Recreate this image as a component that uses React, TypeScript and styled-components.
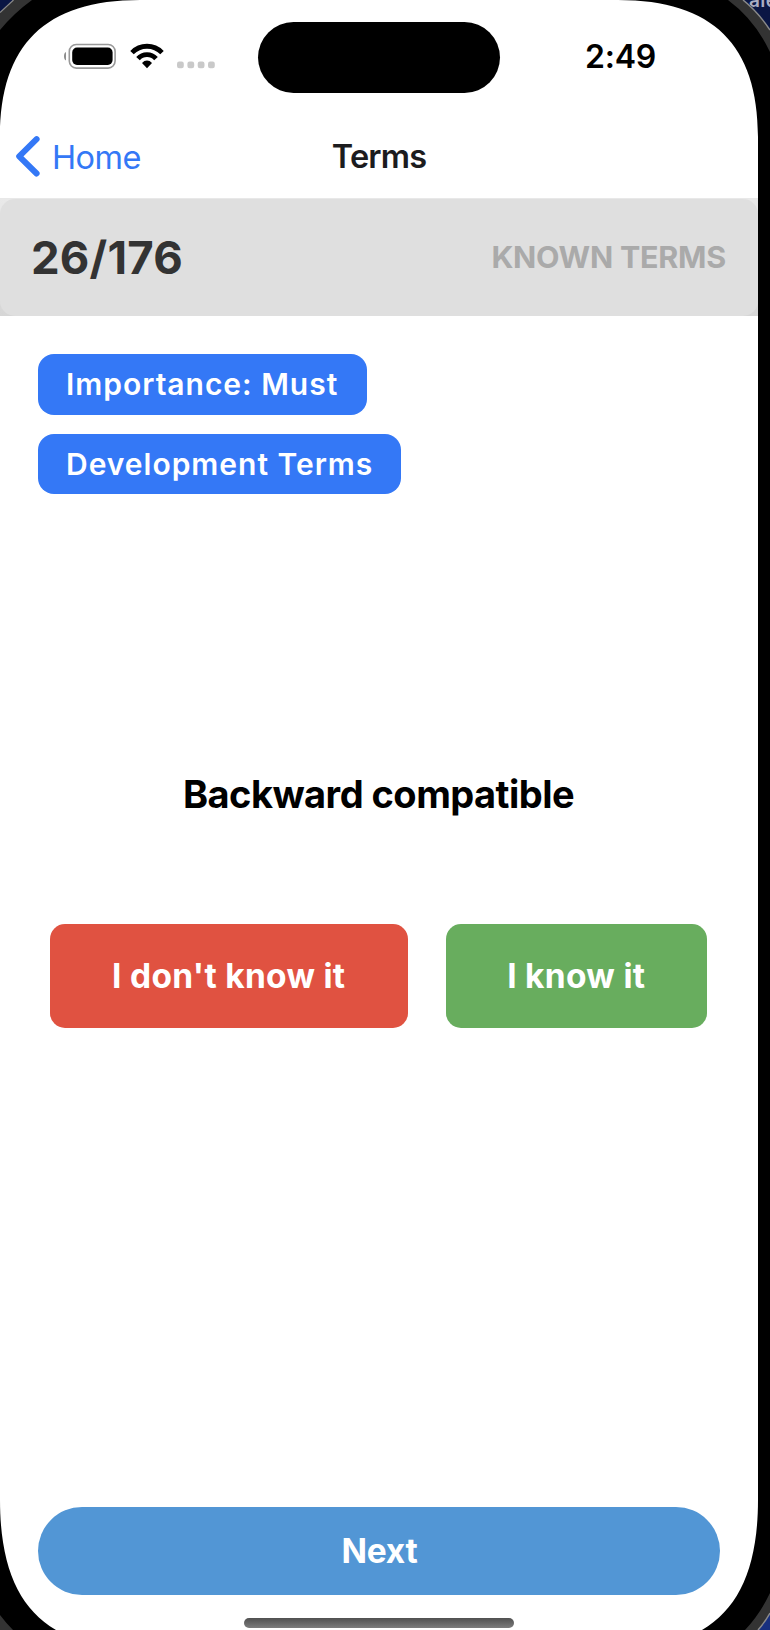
import React from "react";
import styled, { createGlobalStyle } from "styled-components";

const GlobalStyle = createGlobalStyle`
  * { box-sizing: border-box; }
  body {
    margin: 0;
    background: #000;
    font-family: Inter, "Liberation Sans", sans-serif;
  }
`;

const Device = styled.div`
  position: relative;
  width: 770px;
  height: 1630px;
  overflow: hidden;
  background: #000;
`;

const Screen = styled.main`
  display: flex;
  flex-direction: column;
  width: 758px;
  height: 1630px;
  background: #fff;
`;

const StatusBar = styled.header`
  display: grid;
  grid-template-columns: 258px 242px 258px;
  align-items: center;
  height: 114px;
`;

const StatusIcons = styled.div`
  display: flex;
  align-items: center;
  padding: 0 0 2px 64px;
`;

const Island = styled.div`
  height: 71px;
  border-radius: 36px;
  background: #000;
`;

const Clock = styled.time`
  padding-left: 85px;
  font-size: 32px;
  font-weight: 600;
  line-height: 40px;
  letter-spacing: -0.2px;
  color: #000;
`;

const NavBar = styled.nav`
  display: grid;
  grid-template-columns: 250px 1fr 250px;
  align-items: center;
  height: 85px;
  border-bottom: 1px solid #e8e8e8;
`;

const BackButton = styled.a`
  display: flex;
  align-items: center;
  gap: 10px;
  padding-left: 16px;
  font-size: 32.5px;
  letter-spacing: -0.55px;
  color: #3478f6;
`;

const BackLabel = styled.span`
  padding-top: 3px;
  line-height: 40px;
`;

const NavTitle = styled.h1`
  margin: 0;
  padding-top: 1px;
  text-align: center;
  font-size: 32.5px;
  font-weight: 600;
  line-height: 40px;
  letter-spacing: -0.8px;
  color: #1c1c1e;
`;

const ScoreTrack = styled.section`
  height: 117px;
  background: linear-gradient(#e9e9e9, #e0e0e0 50%, #d6d6d6);
`;

const ScoreBar = styled.div`
  display: flex;
  align-items: center;
  justify-content: space-between;
  height: 117px;
  padding: 0 32px 0 31px;
  border-radius: 15px;
  background: #dfdfdf;
`;

const Score = styled.strong`
  font-size: 45.5px;
  font-weight: 700;
  line-height: 56px;
  letter-spacing: 0.2px;
  color: #333;
`;

const ScoreLabel = styled.span`
  padding-bottom: 2px;
  font-size: 30.5px;
  font-weight: 700;
  line-height: 40px;
  letter-spacing: -0.25px;
  color: #aaa;
`;

const TagList = styled.div`
  display: flex;
  flex-direction: column;
  align-items: flex-start;
  gap: 19px;
  padding: 38px 38px 0;
`;

const Tag = styled.span<{ $width: number }>`
  width: ${(p) => p.$width}px;
  height: 60.5px;
  padding-left: 28px;
  border-radius: 16px;
  background: #3478f6;
  color: #fff;
  font-size: 30px;
  font-weight: 600;
  line-height: 61px;
  letter-spacing: 0.98px;
  white-space: nowrap;
`;

const Term = styled.h2`
  margin: 270px 0 0;
  height: 60px;
  padding-right: 1px;
  text-align: center;
  font-size: 38px;
  font-weight: 700;
  line-height: 60px;
  letter-spacing: -0.53px;
  color: #000;
`;

const Answers = styled.div`
  display: flex;
  justify-content: center;
  gap: 38px;
  margin-top: 100px;
  padding-right: 1px;
`;

const AnswerButton = styled.button<{ $color: string; $width: number }>`
  width: ${(p) => p.$width}px;
  height: 104px;
  padding: 0;
  border: 0;
  border-radius: 15px;
  background: ${(p) => p.$color};
  color: #fff;
  font-family: inherit;
  font-size: 33.5px;
  font-weight: 700;
  letter-spacing: 0.3px;
`;

const NextButton = styled.button`
  height: 88px;
  margin: auto 38px 22px;
  padding: 0 0 0 1px;
  border: 0;
  border-radius: 44px;
  background: #5296d5;
  color: #fff;
  font-family: inherit;
  font-size: 33.5px;
  font-weight: 700;
  letter-spacing: -0.2px;
`;

const HomeIndicator = styled.div`
  flex: none;
  width: 270px;
  height: 10px;
  margin: 1px auto 2px;
  border-radius: 5px;
  background: linear-gradient(#505050, #7c7c7c);
`;

const Corner = styled.svg<{ $right?: boolean; $bottom?: boolean }>`
  position: absolute;
  ${(p) => (p.$right ? "right: 0;" : "left: 0;")}
  ${(p) => (p.$bottom ? "bottom: 0;" : "top: 0;")}
  pointer-events: none;
`;

const DesktopText = styled.span`
  position: absolute;
  top: -11px;
  left: 749px;
  font-size: 19px;
  font-weight: 600;
  line-height: 24px;
  letter-spacing: -0.5px;
  color: #a9adc2;
  clip-path: polygon(0 0, 40px 0, 40px 42px, 21px 38px, 9px 22px, 0 15px);
`;

const WifiIcon = styled.svg`
  margin-left: 14px;
`;

const DotsIcon = styled.svg`
  margin-left: 13px;
`;

function Battery() {
  return (
    <svg width="52" height="26" viewBox="0 0 52 26">
      <path d="M2 9C.3 9.900 0 11.500 0 13.200s.3 3.300 2 4.200z" fill="#8f8f8f" />
      <rect x="5.300" y="1.500" width="45.800" height="23.600" rx="7" fill="#fff" stroke="#999" strokeWidth="1.600" />
      <rect x="8.200" y="4.600" width="40.400" height="17.300" rx="4.800" fill="#000" />
    </svg>
  );
}

function Wifi() {
  return (
    <WifiIcon width="34" height="26" viewBox="0 0 34 26" fill="none" stroke="#000" strokeWidth="4.800">
      <path d="M2 9.600A20.900 20.900 0 0 1 32 9.600" />
      <path d="M8 15.700A12 12 0 0 1 26 15.700" />
      <path d="M17 25.200l-5-5.200q2.200-2.400 5-2.400t5 2.400z" fill="#000" stroke="none" />
    </WifiIcon>
  );
}

function SignalDots() {
  return (
    <DotsIcon width="40" height="26" viewBox="0 0 40 26" fill="#c9c9c9">
      {[0, 10.4, 20.7, 31].map((x) => (
        <rect key={x} x={x} y="18.500" width="6.800" height="6.800" rx="2.200" />
      ))}
    </DotsIcon>
  );
}

function Chevron() {
  return (
    <svg width="26" height="42" viewBox="0 0 26 42" fill="none" stroke="#3478f6" strokeWidth="6" strokeLinecap="round" strokeLinejoin="round">
      <path d="M20.600 4.200L3.200 21.300l17.400 17.200" />
    </svg>
  );
}

export default function App() {
  return (
    <Device>
      <GlobalStyle />
      <Screen>
        <StatusBar>
          <StatusIcons>
            <Battery />
            <Wifi />
            <SignalDots />
          </StatusIcons>
          <Island />
          <Clock>2:49</Clock>
        </StatusBar>
        <NavBar>
          <BackButton>
            <Chevron />
            <BackLabel>Home</BackLabel>
          </BackButton>
          <NavTitle>Terms</NavTitle>
        </NavBar>
        <ScoreTrack>
          <ScoreBar>
            <Score>26/176</Score>
            <ScoreLabel>KNOWN TERMS</ScoreLabel>
          </ScoreBar>
        </ScoreTrack>
        <TagList>
          <Tag $width={328.5}>Importance: Must</Tag>
          <Tag $width={362.5}>Development Terms</Tag>
        </TagList>
        <Term>Backward compatible</Term>
        <Answers>
          <AnswerButton $color="#e05241" $width={357.5}>I don't know it</AnswerButton>
          <AnswerButton $color="#68ad5e" $width={261.5}>I know it</AnswerButton>
        </Answers>
        <NextButton>Next</NextButton>
        <HomeIndicator />
      </Screen>
      <Corner width="145" height="140" viewBox="0 0 145 140">
        <path d="M0 0H140C45 0 0 45 0 137z" fill="#000" />
        <path d="M0 0H32Q14 13 0 30z" fill="#333" />
        <path d="M0 0H13L0 12z" fill="#0a1644" />
        <path d="M13.500 0L0 12.500" stroke="#8a8a8a" strokeWidth="1.200" />
      </Corner>
      <Corner $right width="155" height="140" viewBox="615 0 155 140">
        <path d="M618 0H770V137H758C758 45 713 0 618 0z" fill="#000" />
        <path d="M728 0Q755 20 770 52V0z" fill="#333" />
        <path d="M743 0Q758 12 770 30V0z" fill="#0a1644" />
        <path d="M743 0Q758 12 770 30" fill="none" stroke="#8a8a8a" strokeWidth="1.500" />
      </Corner>
      <Corner $bottom width="60" height="140" viewBox="0 1490 60 140">
        <path d="M0 1500C0 1565 18 1608 56 1630H0z" fill="#000" />
        <path d="M0 1615Q6 1623 13 1630H0z" fill="#333" />
      </Corner>
      <Corner $right $bottom width="70" height="140" viewBox="700 1490 70 140">
        <path d="M758 1500C758 1565 740 1608 702 1630H770V1490H758z" fill="#000" />
        <path d="M770 1593Q760 1614 745 1630H770z" fill="#333" />
        <path d="M770 1613Q765 1622 758 1630H770z" fill="#18307f" />
        <path d="M770 1613Q765 1622 758 1630" fill="none" stroke="#8a8a8a" strokeWidth="1.500" />
      </Corner>
      <DesktopText>afe</DesktopText>
    </Device>
  );
}
